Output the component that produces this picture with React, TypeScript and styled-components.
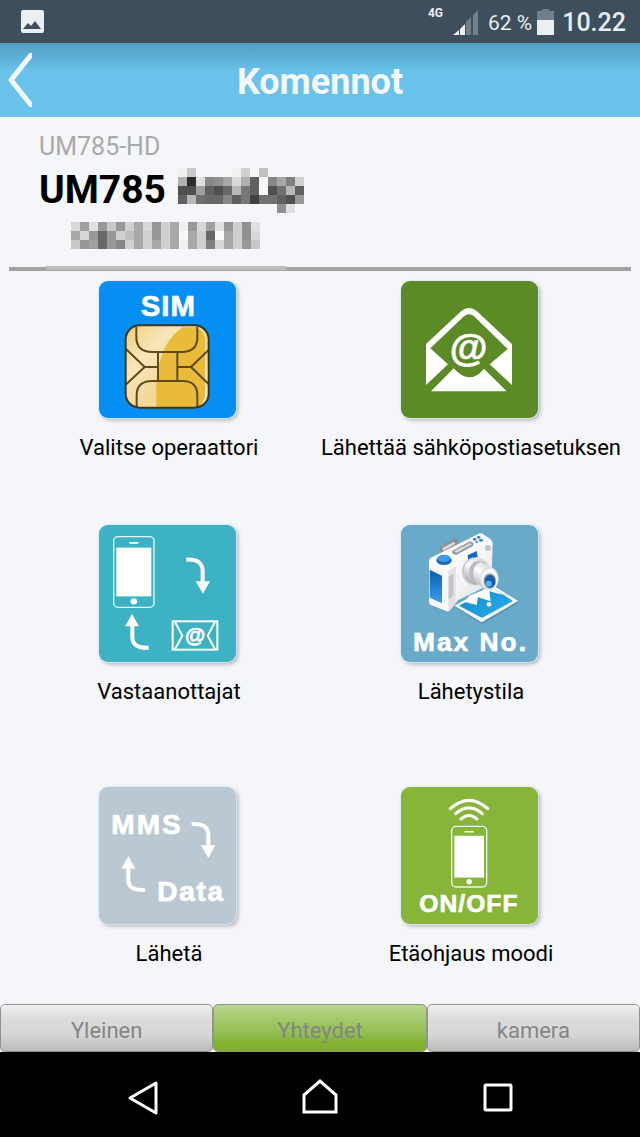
import React from "react";
import styled, { createGlobalStyle } from "styled-components";

const GlobalStyle = createGlobalStyle`
  * { box-sizing: border-box; }
  body {
    margin: 0;
    background: #f5f6f9;
    font-family: Roboto, "Noto Sans", sans-serif;
    color: #000;
  }
  button { font-family: inherit; }
  svg { display: block; }
`;

const Screen = styled.div`
  min-height: 100vh;
  display: flex;
  flex-direction: column;
`;

const StatusBar = styled.div`
  height: 43px;
  flex: none;
  display: flex;
  align-items: center;
  justify-content: space-between;
  padding: 0 14px 0 20px;
  background: #3e4e5d;
  color: #e8edf1;
`;

const StatusGroup = styled.div`
  display: flex;
  align-items: center;
`;

const Network = styled.span`
  align-self: flex-start;
  margin-right: 10px;
  font-size: 12px;
  line-height: 10px;
  font-weight: 700;
`;

const Percent = styled.span`
  margin: 0 5px 0 9px;
  padding-top: 2px;
  font-size: 21px;
  line-height: 26px;
`;

const Clock = styled.time`
  margin-left: 8px;
  padding-top: 2px;
  font-size: 25px;
  line-height: 26px;
  font-weight: 500;
`;

const TitleBar = styled.header`
  height: 74px;
  flex: none;
  display: grid;
  grid-template-columns: 48px 1fr 48px;
  align-items: center;
  background: linear-gradient(#549fc2 0, #5badd3 12px, #68c2ea 28px, #68c2ea 100%);
`;

const BackButton = styled.button`
  padding: 0 0 0 8px;
  border: 0;
  background: none;
`;

const Title = styled.h1`
  margin: 0;
  padding-top: 3px;
  text-align: center;
  color: #f4f8fb;
  font-size: 36px;
  line-height: 42px;
  font-weight: 700;
`;

const Device = styled.section`
  flex: none;
  padding: 14px 39px 18px;
  border-top: 1px solid #fff;
`;

const Model = styled.div`
  color: #a9a9a9;
  font-size: 25px;
  line-height: 30px;
`;

const NameRow = styled.div`
  display: flex;
  align-items: flex-start;
  gap: 12px;
  padding-top: 6px;
`;

const DeviceName = styled.h2`
  margin: 0;
  font-size: 39px;
  line-height: 44px;
  font-weight: 700;
`;

const NumberRow = styled.div`
  padding: 9px 0 0 32px;
`;

const Divider = styled.div`
  position: relative;
  flex: none;
  height: 4px;
  margin: 0 9px 10px;
  background: #a3a3a3;
  &::before {
    content: "";
    position: absolute;
    left: 37px;
    top: -1px;
    width: 240px;
    height: 4px;
    background: #bcbcbc;
  }
`;

const Commands = styled.main`
  flex: 1;
  display: grid;
  grid-template-columns: 1fr 1fr;
  grid-template-rows: 244px 262px auto;
  padding: 0 18px;
`;

const Command = styled.button`
  display: flex;
  flex-direction: column;
  align-items: center;
  padding: 0;
  border: 0;
  background: none;
  color: #000;
`;

const Tile = styled.span<{ $color: string }>`
  display: block;
  width: 137px;
  height: 137px;
  margin-right: 4px;
  border-radius: 9px;
  background: ${(p) => p.$color};
  box-shadow: 0 0 0 1px rgba(220, 236, 246, 0.8), 2px 2px 4px rgba(0, 0, 0, 0.3);
  overflow: hidden;
`;

const Label = styled.span`
  margin-top: 17px;
  font-size: 22px;
  line-height: 26px;
  white-space: nowrap;
`;

const TileText = styled.text`
  font-family: "Liberation Sans", Arial, sans-serif;
  font-weight: 700;
  fill: #fff;
  stroke: #fff;
  stroke-width: 2;
`;

const Tabs = styled.nav`
  flex: none;
  display: grid;
  grid-template-columns: repeat(3, 1fr);
`;

const Tab = styled.button<{ $active?: boolean }>`
  height: 48px;
  padding: 5px 0 0;
  border: 1px solid #929292;
  border-radius: 5px;
  background: ${(p) =>
    p.$active
      ? "linear-gradient(#bad68f 0, #a3c96b 30%, #91bd4d 65%, #84b232 80%, #80b02d 100%)"
      : "linear-gradient(#f0f0f0 0, #dcdcdc 28%, #d6d6d6 65%, #bbbbbb 100%)"};
  color: #858585;
  font-size: 22px;
  line-height: 26px;
`;

const SystemNav = styled.nav`
  flex: none;
  height: 85px;
  display: flex;
  justify-content: center;
  align-items: center;
  gap: 138px;
  padding-top: 6px;
  background: #000;
`;

const NavButton = styled.button`
  width: 40px;
  height: 40px;
  padding: 0;
  border: 0;
  background: none;
`;

const CELL = 9;

/* Each pair of hex digits is the grey level of one block; ".." is left empty. */
const hiddenName = [
  "f0c8........f0d0..c0......",
  "b02ce08890a8d8b060..88a880d0",
  "5050a0605068b87860f85070b860",
  "60b8706868886078407070605098",
  "......................90e0..",
];

const hiddenNumber = [
  "d8a0e098c898d0a8d898d0a8f098d8a0e098d090e0",
  "a8d8986898d0c0a8d098d0a8f8a8d068fba8d090d8",
  "c898a0689888d0a8d0a8d0a8f0a8d080d8a8d098c8",
];

function Mosaic({ rows }: { rows: string[] }) {
  const columns = Math.max(...rows.map((r) => r.length / 2));
  return (
    <svg
      width={columns * CELL}
      height={rows.length * CELL}
      shapeRendering="crispEdges"
      aria-hidden="true"
    >
      {rows.flatMap((row, y) =>
        (row.match(/../g) ?? []).map((v, x) =>
          v === ".." ? null : (
            <rect
              key={`${x}-${y}`}
              x={x * CELL}
              y={y * CELL}
              width={CELL}
              height={CELL}
              fill={`#${v}${v}${v}`}
            />
          )
        )
      )}
    </svg>
  );
}

function SimArt() {
  return (
    <svg width="137" height="137" viewBox="40 31 411 411">
      <defs>
        <linearGradient id="simPale" x1="0" y1="0" x2="1" y2="1">
          <stop offset="0" stopColor="#f0cf7a" />
          <stop offset="0.3" stopColor="#f8e6bb" />
          <stop offset="0.6" stopColor="#f3d794" />
          <stop offset="1" stopColor="#fbeccb" />
        </linearGradient>
        <clipPath id="simClip">
          <rect x="120" y="164" width="249" height="247" rx="42" />
        </clipPath>
      </defs>
      <TileText x="165" y="137" fontSize="88" letterSpacing="3">SIM</TileText>
      <rect x="120" y="164" width="249" height="247" rx="42" fill="url(#simPale)" />
      <g clipPath="url(#simClip)">
        <path d="M292 170C232 206 204 290 213 415H330Q358 400 358 370V200Q352 178 330 170Z" fill="#eabb3a" />
        <g fill="none" stroke="#5e4a1b" strokeWidth="6">
          <path d="M152 168V200Q152 244 200 244H288Q335 244 335 200V168" />
          <path d="M153 411V374Q153 331 200 331H290Q335 331 335 374V411" />
          <path d="M217 244V331M275 244V331" />
          <path d="M217 289H177L120 234M177 289L120 342M275 289H316L371 236M316 289L371 342" />
        </g>
      </g>
      <rect x="120" y="164" width="249" height="247" rx="42" fill="none" stroke="#3f351b" strokeWidth="6" />
    </svg>
  );
}

function MailArt() {
  return (
    <svg width="137" height="137" viewBox="33 31 411 411">
      <path
        fill="#fff"
        fillRule="evenodd"
        d="M108 220L214 121Q237 103 260 121L366 220V343L299 281L353 235L252 137Q237 125 222 137L121 233L174 281L108 343Z"
      />
      <path fill="#fff" d="M191 293Q215 320 238 320Q261 320 282 294L350 362H123Z" />
      <TileText x="236" y="270" fontSize="116" textAnchor="middle">@</TileText>
    </svg>
  );
}

function Phone({ x, y, width, height }: { x: number; y: number; width: number; height: number }) {
  const centre = x + width / 2;
  return (
    <g>
      <rect x={x} y={y} width={width} height={height} rx="13" fill="none" stroke="#e8f8f8" strokeWidth="4" />
      <rect x={x + 8} y={y + height * 0.155} width={width - 16} height={height * 0.69} fill="#fff" />
      <rect x={centre - 14} y={y + height * 0.075} width="28" height="5" rx="2" fill="#fff" />
      <circle cx={centre} cy={y + height * 0.915} r={height * 0.045} fill="#fff" />
    </g>
  );
}

function RecipientsArt() {
  return (
    <svg width="137" height="137" viewBox="40 29 411 411">
      <Phone x={84} y={64} width={121} height={212} />
      <path d="M302 133Q351 130 351 168V200" fill="none" stroke="#fff" strokeWidth="12" />
      <path d="M330 198H373L352 235Z" fill="#fff" />
      <path d="M189 397Q140 400 140 365V330" fill="none" stroke="#fff" strokeWidth="12" />
      <path d="M118 333H160L139 296Z" fill="#fff" />
      <rect x="261" y="318" width="134" height="85" fill="none" stroke="#fff" strokeWidth="6" />
      <path d="M268 320L290 361L268 402M388 320L366 361L388 402" fill="none" stroke="#fff" strokeWidth="6" />
      <TileText x="328" y="379" fontSize="62" textAnchor="middle">@</TileText>
    </svg>
  );
}

function CameraArt() {
  return (
    <svg width="137" height="137" viewBox="33 29 411 411">
      <defs>
        <linearGradient id="camFront" x1="0" y1="0" x2="1" y2="1">
          <stop offset="0" stopColor="#ffffff" />
          <stop offset="0.6" stopColor="#f4f4f6" />
          <stop offset="1" stopColor="#d0d2d6" />
        </linearGradient>
        <linearGradient id="camBlue" x1="0" y1="0" x2="0" y2="1">
          <stop offset="0" stopColor="#0b5cb4" />
          <stop offset="1" stopColor="#3aa0ea" />
        </linearGradient>
        <linearGradient id="camLens" x1="0.7" y1="0" x2="0.3" y2="1">
          <stop offset="0" stopColor="#d4d6d9" />
          <stop offset="0.4" stopColor="#ffffff" />
          <stop offset="1" stopColor="#a6a9af" />
        </linearGradient>
        <linearGradient id="photoSky" x1="0" y1="0" x2="1" y2="1">
          <stop offset="0" stopColor="#0b83c8" />
          <stop offset="1" stopColor="#2bb4f2" />
        </linearGradient>
      </defs>
      <path d="M197 276L310 210L386 262L276 326Z" fill="#3f7593" opacity="0.5" />
      <path d="M194 271L306 208L384 257L275 321Z" fill="#fff" />
      <path d="M207 271L306 216L369 257L276 308Z" fill="url(#photoSky)" />
      <path d="M222 259L260 269L264 246L302 258L298 228L338 238L306 216L240 240Z" fill="#fff" />
      <circle cx="297" cy="267" r="7" fill="#fff" />
      <path d="M150 93L195 69Q202 67 204 75V88L158 114H150Z" fill="#8c9196" />
      <path d="M157 98L192 79L196 86L160 106Z" fill="#d8dadc" />
      <path d="M117 139Q117 130 126 126L266 55Q273 52 280 57L302 72Q308 77 308 85L304 205L204 255L180 285Q174 290 168 287L124 269Q117 266 117 258Z" fill="url(#camFront)" />
      <path d="M117 139L168 167Q175 170 175 178V288L124 269Q117 266 117 258Z" fill="#f8f8fa" />
      <path d="M175 168L197 155V260L175 287Z" fill="#e0e1e5" />
      <path d="M176 184L190 174V240L176 252Z" fill="#c2c4ca" />
      <path d="M119 163L156 181V264L119 247Z" fill="url(#camBlue)" />
      <ellipse cx="162" cy="135" rx="23" ry="14" fill="#1669b4" />
      <ellipse cx="162" cy="129" rx="20" ry="11" fill="#3a9ce8" />
      <path d="M187 106L237 79Q246 76 251 84L249 92L200 118Q191 119 186 113Z" fill="#989ca2" />
      <path d="M192 108L239 84L246 87L200 112Z" fill="#d9dadd" />
      <g fill="#2382cf">
        <ellipse cx="254" cy="72" rx="5" ry="4" />
        <ellipse cx="266" cy="66" rx="5" ry="4" />
        <ellipse cx="260" cy="80" rx="4" ry="3" />
        <ellipse cx="273" cy="75" rx="6" ry="4" />
      </g>
      <circle cx="294" cy="98" r="9" fill="#c2c4c9" />
      <path d="M233 120L260 107L263 124L235 140Z" fill="#1168bd" />
      <ellipse cx="256" cy="168" rx="40" ry="42" fill="#c6c8cd" />
      <ellipse cx="262" cy="167" rx="40" ry="40" fill="url(#camLens)" />
      <ellipse cx="268" cy="170" rx="31" ry="34" fill="#b9bcc2" />
      <path d="M274 139L304 156V226L276 214Q249 204 249 174Q251 146 274 139Z" fill="url(#camLens)" />
      <ellipse cx="298" cy="190" rx="28" ry="35" fill="#dcdee1" />
      <ellipse cx="299" cy="191" rx="25" ry="31" fill="#f8f8fa" />
      <ellipse cx="299" cy="197" rx="19" ry="23" fill="#a5abb3" />
      <ellipse cx="300" cy="198" rx="16" ry="20" fill="#1a5fae" />
      <ellipse cx="296" cy="205" rx="9" ry="9" fill="#54b7f5" />
      <TileText x="69" y="408" fontSize="79" letterSpacing="6">Max No.</TileText>
    </svg>
  );
}

function MmsArt() {
  return (
    <svg width="137" height="137" viewBox="40 30 411 411">
      <TileText x="77" y="172" fontSize="84" letterSpacing="6">MMS</TileText>
      <TileText x="215" y="372" fontSize="84" letterSpacing="5">Data</TileText>
      <path d="M318 141Q368 138 368 174V207" fill="none" stroke="#fff" strokeWidth="12" />
      <path d="M346 205H389L368 243Z" fill="#fff" />
      <path d="M178 339Q128 342 128 308V272" fill="none" stroke="#fff" strokeWidth="12" />
      <path d="M107 275H149L128 238Z" fill="#fff" />
    </svg>
  );
}

function RemoteArt() {
  return (
    <svg width="137" height="137" viewBox="33 30 411 411">
      <g fill="none" stroke="#fff" strokeWidth="9" strokeLinecap="round">
        <path d="M181 95Q237 45 293 95" />
        <path d="M197 110Q237 75 277 110" />
        <path d="M213 126Q237 105 261 126" />
      </g>
      <Phone x={185} y={148} width={105} height={182} />
      <TileText x="88" y="406" fontSize="74" letterSpacing="3">ON/OFF</TileText>
    </svg>
  );
}

const commands = [
  { label: "Valitse operaattori", color: "#058ff5", Art: SimArt },
  { label: "Lähettää sähköpostiasetuksen", color: "#5b8a26", Art: MailArt },
  { label: "Vastaanottajat", color: "#3cb2c4", Art: RecipientsArt },
  { label: "Lähetystila", color: "#69aaca", Art: CameraArt },
  { label: "Lähetä", color: "#bbc8d2", Art: MmsArt },
  { label: "Etäohjaus moodi", color: "#86b539", Art: RemoteArt },
];

export default function App() {
  return (
    <>
      <GlobalStyle />
      <Screen>
        <StatusBar>
          <svg width="24" height="24" viewBox="0 0 24 24" aria-hidden="true">
            <rect x="1" y="0" width="23" height="23" rx="2" fill="#eceff1" />
            <path d="M3 19L8 13L11 16L15 11L21 19Z" fill="#3e4e5d" />
          </svg>
          <StatusGroup>
            <Network>4G</Network>
            <svg width="26" height="26" viewBox="0 0 26 26" aria-hidden="true">
              <path d="M0 26L6 21V26ZM7 20L12 15V26H7Z" fill="#eceff1" />
              <path d="M13 13L18 8V26H13ZM20 6L25 1V26H20Z" fill="#73808b" />
            </svg>
            <Percent>62 %</Percent>
            <svg width="17" height="26" viewBox="0 0 17 26" aria-hidden="true">
              <path d="M5 0H12V2H17V12H0V2H5Z" fill="#73808b" />
              <path d="M0 11H17V26H0Z" fill="#eceff1" />
            </svg>
            <Clock>10.22</Clock>
          </StatusGroup>
        </StatusBar>
        <TitleBar>
          <BackButton aria-label="Takaisin">
            <svg width="24" height="54" viewBox="0 0 24 54">
              <path d="M23 2L3 27L23 52" fill="none" stroke="#f2f9fd" strokeWidth="5" strokeLinecap="round" strokeLinejoin="round" />
            </svg>
          </BackButton>
          <Title>Komennot</Title>
        </TitleBar>
        <Device>
          <Model>UM785-HD</Model>
          <NameRow>
            <DeviceName>UM785</DeviceName>
            <Mosaic rows={hiddenName} />
          </NameRow>
          <NumberRow>
            <Mosaic rows={hiddenNumber} />
          </NumberRow>
        </Device>
        <Divider />
        <Commands>
          {commands.map(({ label, color, Art }) => (
            <Command key={label}>
              <Tile $color={color}>
                <Art />
              </Tile>
              <Label>{label}</Label>
            </Command>
          ))}
        </Commands>
        <Tabs>
          <Tab>Yleinen</Tab>
          <Tab $active>Yhteydet</Tab>
          <Tab>kamera</Tab>
        </Tabs>
        <SystemNav>
          <NavButton aria-label="Back">
            <svg width="40" height="40" viewBox="0 0 40 40">
              <path d="M34 5V35L8 20Z" fill="none" stroke="#fff" strokeWidth="3" strokeLinejoin="round" />
            </svg>
          </NavButton>
          <NavButton aria-label="Home">
            <svg width="40" height="40" viewBox="0 0 40 40">
              <path d="M4 34V17L20 3L36 17V34Z" fill="none" stroke="#fff" strokeWidth="3" />
            </svg>
          </NavButton>
          <NavButton aria-label="Recent apps">
            <svg width="40" height="40" viewBox="0 0 40 40">
              <rect x="7" y="7" width="26" height="25" rx="1" fill="none" stroke="#fff" strokeWidth="3" />
            </svg>
          </NavButton>
        </SystemNav>
      </Screen>
    </>
  );
}
